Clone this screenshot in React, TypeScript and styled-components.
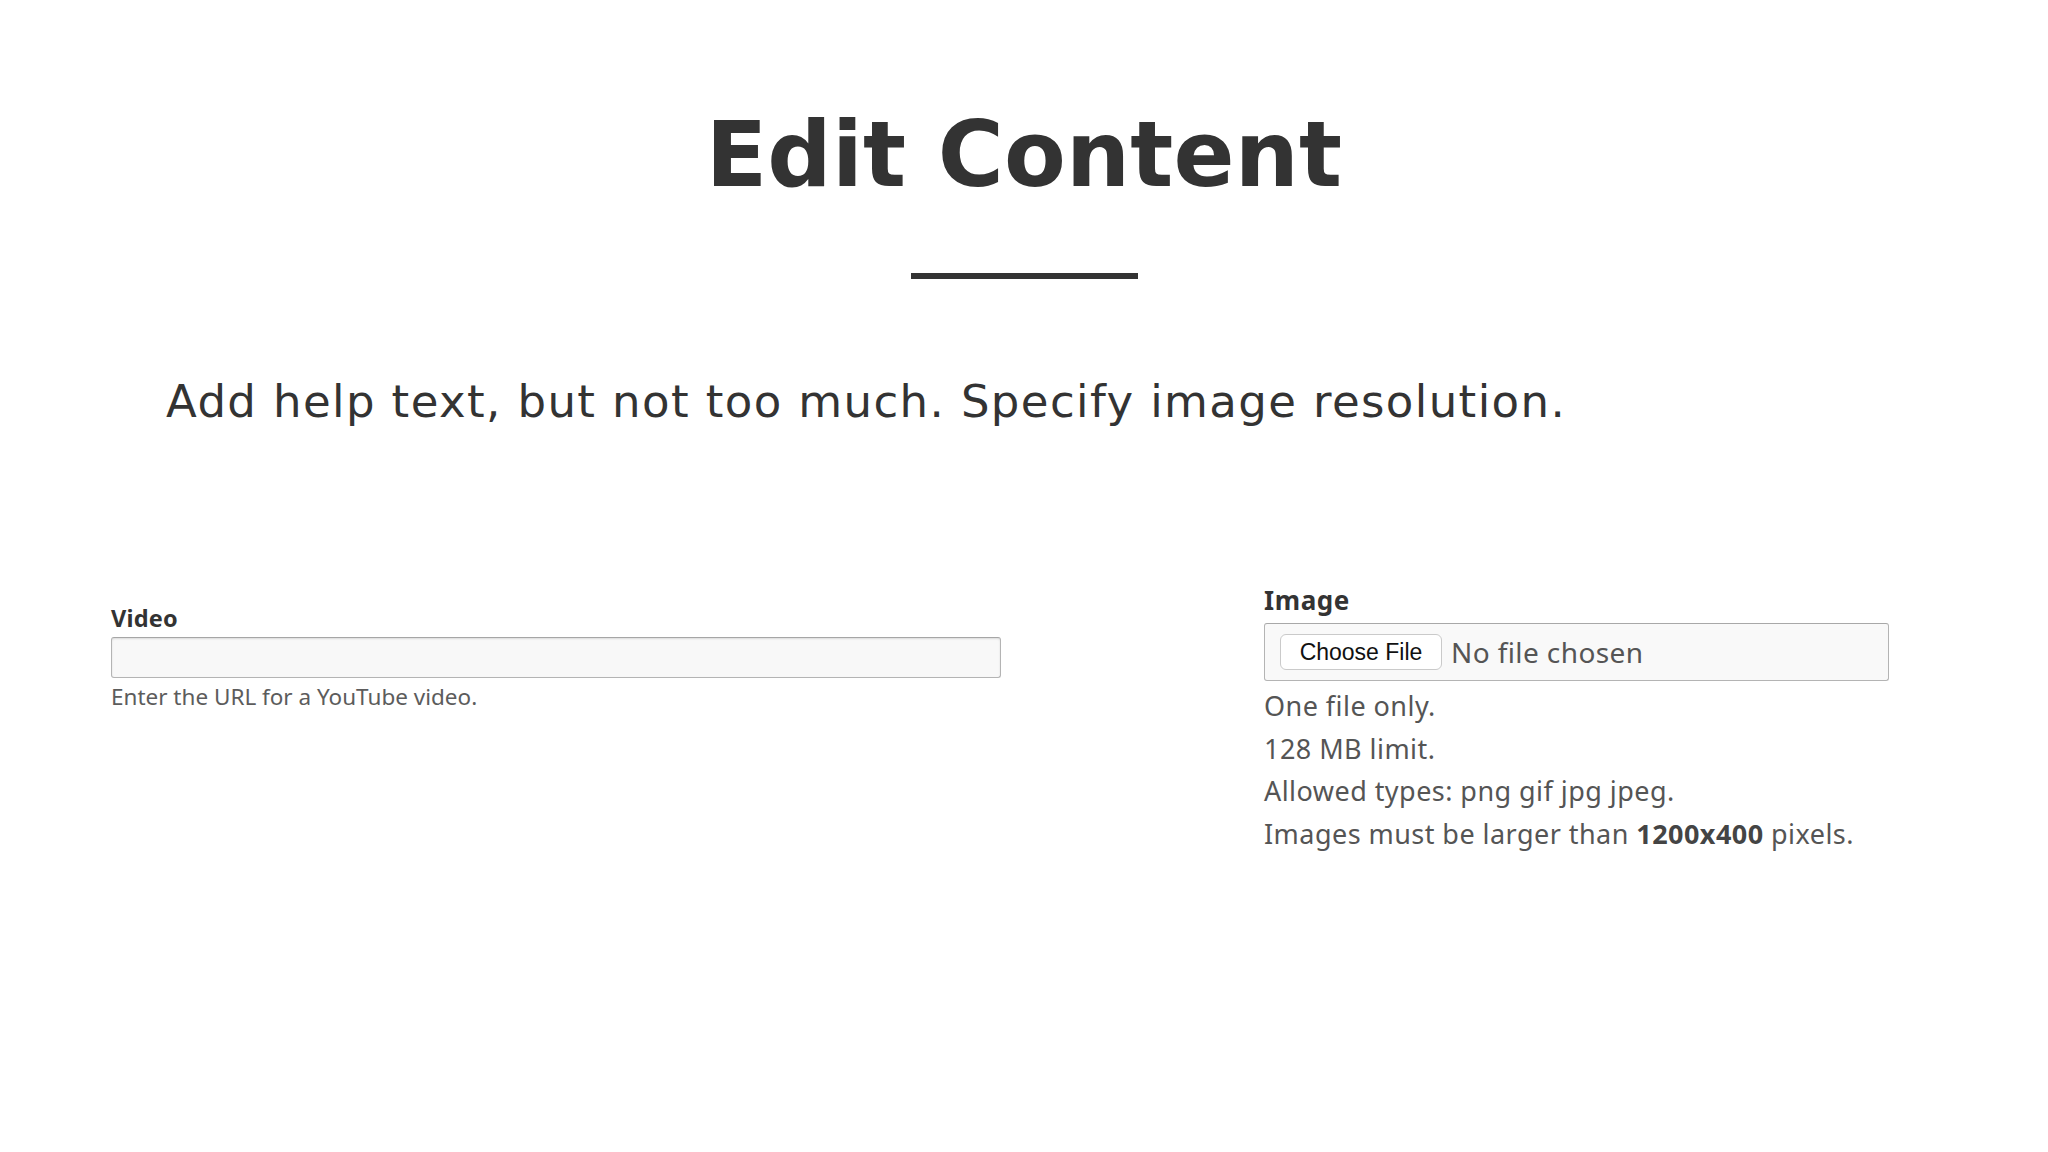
import React from "react";
import styled, { createGlobalStyle } from "styled-components";

const Global = createGlobalStyle`
  html, body {
    margin: 0;
    padding: 0;
    background: #ffffff;
  }
  body {
    font-family: "Noto Sans", "DejaVu Sans", sans-serif;
    color: #333333;
  }
`;

const Page = styled.main`
  width: 2048px;
  min-height: 1152px;
  display: flex;
  flex-direction: column;
  padding-top: 110px;
  box-sizing: border-box;
`;

const Header = styled.header`
  display: flex;
  flex-direction: column;
  align-items: center;
`;

const Title = styled.h1`
  margin: 0;
  font-family: "DejaVu Sans", sans-serif;
  font-weight: 700;
  font-size: 90px;
  line-height: 90px;
  letter-spacing: 0.2px;
  color: #333333;
`;

const Divider = styled.div`
  width: 227px;
  height: 6px;
  margin-top: 73px;
  background: #333333;
`;

const Lead = styled.p`
  margin: 100px 0 0 0;
  padding-left: 166px;
  font-family: "DejaVu Sans", sans-serif;
  font-weight: 400;
  font-size: 45px;
  line-height: 45px;
  letter-spacing: 1.4px;
  color: #333333;
`;

const Fields = styled.section`
  display: flex;
  align-items: flex-start;
  gap: 263px;
  padding-left: 111px;
  margin-top: 161px;
`;

const Field = styled.div<{ $width: number; $offset: number }>`
  width: ${(p) => p.$width}px;
  margin-top: ${(p) => p.$offset}px;
  display: flex;
  flex-direction: column;
`;

const Label = styled.label<{ $size: number; $lh: number; $track: number }>`
  font-family: "Noto Sans", sans-serif;
  font-weight: 700;
  font-size: ${(p) => p.$size}px;
  line-height: ${(p) => p.$lh}px;
  letter-spacing: ${(p) => p.$track}px;
  color: #333333;
`;

const TextInput = styled.input`
  box-sizing: border-box;
  width: 100%;
  height: 41px;
  margin-top: 5px;
  border: 1px solid #b4b4b4;
  border-top-color: #a6a6a6;
  border-radius: 3px;
  background: #f8f8f8;
  box-shadow: inset 0 1px 2px rgba(0, 0, 0, 0.12);
  outline: none;
`;

const Help = styled.div`
  margin-top: 4px;
  font-family: "Noto Sans", sans-serif;
  font-size: 22.5px;
  line-height: 29px;
  color: #5c5c5c;
`;

const FileBox = styled.div`
  box-sizing: border-box;
  width: 625px;
  height: 58px;
  margin-top: 7px;
  padding-left: 15px;
  display: flex;
  align-items: center;
  border: 1px solid #b4b4b4;
  border-top-color: #a8a8a8;
  border-radius: 3px;
  background: #f9f9f9;
`;

const ChooseButton = styled.button`
  box-sizing: border-box;
  width: 162px;
  height: 36px;
  padding: 0;
  display: flex;
  align-items: center;
  justify-content: center;
  border: 1px solid #cacaca;
  border-radius: 6px;
  background: #ffffff;
  font-family: "Liberation Sans", Arial, sans-serif;
  font-size: 23px;
  color: #111111;
`;

const FileName = styled.span`
  margin-left: 9px;
  font-family: "Noto Sans", sans-serif;
  font-size: 28px;
  letter-spacing: 0.4px;
  color: #555555;
`;

const HelpList = styled.div`
  margin-top: 4px;
  display: flex;
  flex-direction: column;
`;

const HelpLine = styled.div`
  font-family: "Noto Sans", sans-serif;
  font-size: 27px;
  line-height: 42.7px;
  letter-spacing: 0.45px;
  color: #555555;
  white-space: nowrap;

  strong {
    font-weight: 700;
    color: #444444;
  }
`;

export default function App() {
  return (
    <>
      <Global />
      <Page>
        <Header>
          <Title>Edit Content</Title>
          <Divider />
        </Header>
        <Lead>Add help text, but not too much. Specify image resolution.</Lead>
        <Fields>
          <Field $width={890} $offset={19}>
            <Label $size={23.5} $lh={28} $track={0.2}>Video</Label>
            <TextInput type="text" aria-label="Video" />
            <Help>Enter the URL for a YouTube video.</Help>
          </Field>
          <Field $width={626} $offset={0}>
            <Label $size={26} $lh={31} $track={0.6}>Image</Label>
            <FileBox>
              <ChooseButton type="button">Choose File</ChooseButton>
              <FileName>No file chosen</FileName>
            </FileBox>
            <HelpList>
              <HelpLine>One file only.</HelpLine>
              <HelpLine>128 MB limit.</HelpLine>
              <HelpLine>Allowed types: png gif jpg jpeg.</HelpLine>
              <HelpLine>
                Images must be larger than <strong>1200x400</strong> pixels.
              </HelpLine>
            </HelpList>
          </Field>
        </Fields>
      </Page>
    </>
  );
}
